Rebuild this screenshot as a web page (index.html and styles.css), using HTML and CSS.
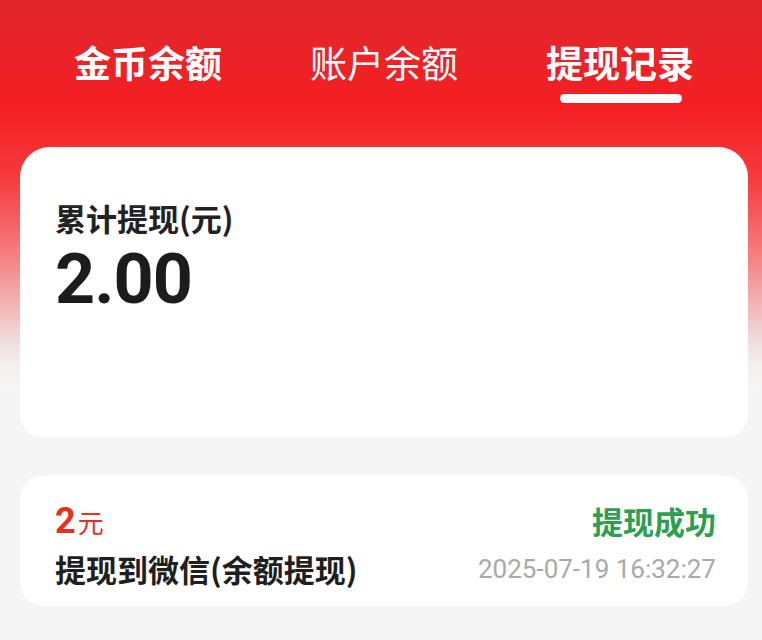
FILE: index.html
```html
<!DOCTYPE html>
<html lang="zh-CN">
<head>
<meta charset="utf-8">
<link rel="stylesheet" href="styles.css">
</head>
<body>
<div class="page">
  <nav class="tabs">
    <div class="tab tab-bold">金币余额</div>
    <div class="tab">账户余额</div>
    <div class="tab tab-active">提现记录</div>
  </nav>
  <section class="summary">
    <div class="summary-label">累计提现(元)</div>
    <div class="summary-amount">2.00</div>
  </section>
  <section class="record">
    <div class="record-row">
      <div class="record-amount"><span class="num">2</span><span class="unit">元</span></div>
      <div class="record-status">提现成功</div>
    </div>
    <div class="record-row record-row-2">
      <div class="record-title">提现到微信(余额提现)</div>
      <div class="record-time">2025-07-19 16:32:27</div>
    </div>
  </section>
</div>
</body>
</html>
```

FILE: styles.css
```css
* { box-sizing: border-box; }
html, body { margin: 0; padding: 0; }
body {
  width: 762px;
  height: 640px;
  overflow: hidden;
  font-family: "Noto Sans CJK SC", "Noto Sans", sans-serif;
  background: linear-gradient(to bottom,
    #e0282e 0px,
    #f41f22 105px,
    #f5393c 175px,
    #f6797b 250px,
    #f3afb0 300px,
    #f1dcdc 340px,
    #f4f0f0 365px,
    #f5f5f5 390px,
    #f5f5f5 640px);
}
.page {
  display: flex;
  flex-direction: column;
}
.tabs {
  display: grid;
  grid-template-columns: repeat(3, 236px);
  padding: 37px 24px 0 30px;
  height: 147px;
}
.tab {
  text-align: center;
  font-size: 37px;
  line-height: 50px;
  color: #fff;
  font-weight: 400;
  position: relative;
}
.tab-bold { font-weight: 700; }
.tab-active { font-weight: 700; }
.tab-active::after {
  content: "";
  position: absolute;
  left: 50%;
  top: 57px;
  width: 122px;
  height: 9px;
  margin-left: -60px;
  background: #fff;
  border-radius: 5px;
}
.summary {
  margin: 0 14px 0 20px;
  height: 290px;
  background: #fff;
  border-radius: 30px 30px 22px 22px;
  padding: 52px 35px 0 35px;
}
.summary-label {
  font-size: 31px;
  line-height: 38px;
  font-weight: 700;
  color: #222;
}
.summary-amount {
  font-family: Roboto, "Liberation Sans", sans-serif;
  font-size: 70px;
  line-height: 80px;
  font-weight: 700;
  color: #1c1c1e;
  margin-top: 2px;
  letter-spacing: -1px;
}
.record {
  margin: 38px 14px 0 20px;
  height: 131px;
  background: #fff;
  border-radius: 24px;
  padding: 24px 32px 0 35px;
}
.record-row {
  display: flex;
  justify-content: space-between;
  align-items: center;
}
.record-row-2 { margin-top: 6px; }
.record-amount {
  color: #e8301f;
  display: flex;
  align-items: baseline;
}
.record-amount .num {
  font-family: Roboto, "Liberation Sans", sans-serif;
  font-weight: 700;
  font-size: 36px;
  line-height: 44px;
}
.record-amount .unit {
  font-size: 26px;
  margin-left: 2px;
}
.record-status {
  color: #2e9e50;
  font-weight: 700;
  font-size: 31px;
  line-height: 44px;
}
.record-title {
  font-size: 31px;
  line-height: 40px;
  font-weight: 700;
  color: #1f1f1f;
}
.record-time {
  font-family: Roboto, "Liberation Sans", sans-serif;
  font-size: 26px;
  line-height: 40px;
  color: #a9a9a9;
}
```
